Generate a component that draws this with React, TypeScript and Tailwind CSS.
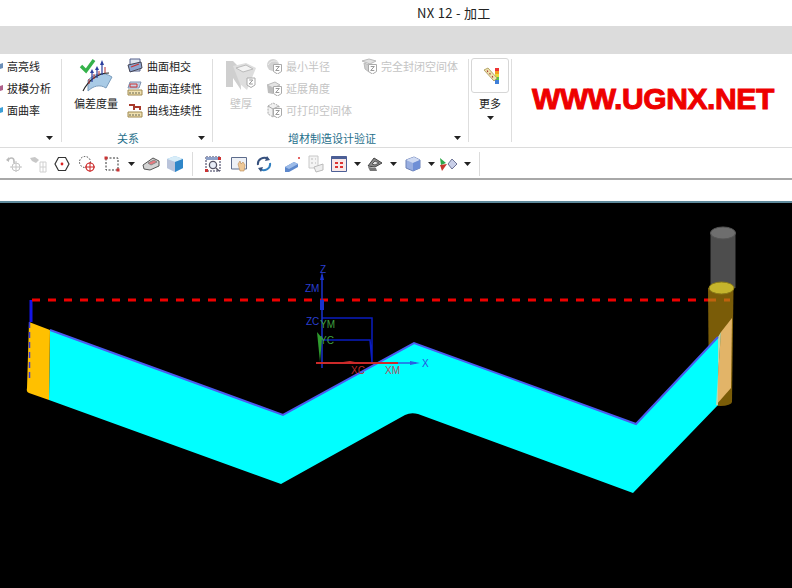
import React from "react";

const Arrow = () => (
  <svg width="7" height="4" viewBox="0 0 7 4" className="block shrink-0">
    <path d="M0 0H7L3.5 4Z" fill="#222" />
  </svg>
);

const Badge = ({ x, y }: { x: number; y: number }) => (
  <g transform={`translate(${x} ${y})`}>
    <path d="M0 0H8V7L4 9.5L0 7Z" fill="#fff" stroke="#aaa" />
    <path d="M2.2 2H5.8L2.2 6H5.8" fill="none" stroke="#999" strokeWidth="1" />
  </g>
);

const I = ({ w = 16, h = 16, children }: { w?: number; h?: number; children: React.ReactNode }) => (
  <svg width={w} height={h} viewBox={`0 0 ${w} ${h}`} className="block shrink-0">
    {children}
  </svg>
);

const Sep = () => <div className="w-px shrink-0 bg-[#dedede] mt-[4px] mb-[5px]" />;

const Deviation = () => (
  <I w={34} h={34}>
    <path d="M9 22C15 16 24 13 33 19L27 30C21 26 14 28 9 33Z" fill="#a9cbe6" stroke="#7a9cbc" />
    <path d="M4 33C9 23 18 15 30 15" fill="none" stroke="#222" strokeWidth="1.1" />
    <path d="M13 24V14M18 20V11M23 17V6" stroke="#2c3f9e" strokeWidth="1.2" fill="none" />
    <path d="M11 15L13 11L15 15ZM16 12L18 8L20 12ZM21 7L23 2L25 7Z" fill="#2c3f9e" />
    <path d="M10 26V21M15 21V16M20 17V13M26 15V9" stroke="#b33" strokeWidth="1" fill="none" />
    <path d="M2 8L7 13L15 2" fill="none" stroke="#35b24a" strokeWidth="3.4" />
  </I>
);

const Intersect = () => (
  <I>
    <path d="M3 1H13V13H3Z" fill="#dfe5ef" stroke="#55608c" />
    <path d="M1 7L14 4L15 10L3 14Z" fill="#8ea5cf" stroke="#445" />
    <path d="M4 9L12 6" stroke="#c33" strokeWidth="1.2" />
  </I>
);

const SurfCont = () => (
  <I>
    <path d="M3 2H14L12 8H1Z" fill="#c4d4e8" stroke="#8093b0" />
    <path d="M3 4H10V7H3Z" fill="none" stroke="#c33" />
    <path d="M1 10H15V15H1Z" fill="#efe0b0" stroke="#a08a50" />
    <path d="M3 12V14M6 12V14M9 12V14M12 12V14" stroke="#665" />
  </I>
);

const CurveCont = () => (
  <I>
    <path d="M2 3H7V8M7 5H13V8" fill="none" stroke="#a8392b" strokeWidth="2" />
    <path d="M1 10H15V15H1Z" fill="#efe0b0" stroke="#a08a50" />
    <path d="M3 12V14M6 12V14M9 12V14M12 12V14" stroke="#665" />
  </I>
);

const Partial = ({ color }: { color: string }) => (
  <I w={3} h={10}>
    <path d="M0 3L3 2V7L0 8Z" fill={color} />
  </I>
);

const WallThickness = () => (
  <I w={32} h={32}>
    <path d="M1 1H8L15 8L16 30L8 18V27H1Z" fill="#cfcfcf" />
    <path d="M8 6L21 3L31 8L22 30L15 24Z" fill="#dedede" />
    <path d="M11 8L21 5L28 9L18 12Z" fill="#f3f3f3" stroke="#bbb" />
    <Badge x={22} y={18} />
  </I>
);

const Ball = () => (
  <I>
    <circle cx="7" cy="7" r="6" fill="#d2d2d2" />
    <path d="M2 7C4 3 9 2 12 4" stroke="#eee" fill="none" />
    <Badge x={7.5} y={6.5} />
  </I>
);
const Draft = () => (
  <I>
    <path d="M1 5L9 2L14 5L7 8Z" fill="#e4e4e4" stroke="#bbb" />
    <path d="M1 5L7 8V14L2 13Z" fill="#bdbdbd" />
    <Badge x={7.5} y={6.5} />
  </I>
);
const Print = () => (
  <I>
    <path d="M2 4L7 1L13 4V11L7 15L2 12Z" fill="#f0f0f0" stroke="#aaa" strokeDasharray="2 1" />
    <path d="M2 4L7 7L13 4M7 7V15" stroke="#aaa" fill="none" />
    <Badge x={7.5} y={6.5} />
  </I>
);
const Closed = () => (
  <I>
    <path d="M1 3L8 1L15 3L9 6Z" fill="#e2e2e2" stroke="#bbb" />
    <path d="M3 5L8 7V14L4 11Z" fill="#cfcfcf" stroke="#bbb" />
    <Badge x={7.5} y={6.5} />
  </I>
);

const RainbowRuler = () => (
  <I w={18} h={18}>
    <path d="M14 1H18V4H14Z" fill="#e33" />
    <path d="M14 4H18V7H14Z" fill="#f59a23" />
    <path d="M14 7H18V10H14Z" fill="#e8dc3a" />
    <path d="M14 10H18V13H14Z" fill="#5cbf4a" />
    <path d="M14 13H18V17H14Z" fill="#3f7fd8" />
    <path d="M3 3L7 1L16 11L13 14Z" fill="#efe4b0" stroke="#b5a66a" />
    <path d="M6 4.5L7 4M8.5 7L9.5 6.5M11 10L12 9.5" stroke="#a33" strokeWidth="1.4" />
  </I>
);

type RowProps = { icon: React.ReactNode; label: string; dim?: boolean };
const Row = ({ icon, label, dim }: RowProps) => (
  <div className="flex items-center h-[22px] gap-[4px] whitespace-nowrap">
    {icon}
    <span className={dim ? "text-[#c4c4c4]" : "text-[#222]"}>{label}</span>
  </div>
);

const Tb = {
  Undo: () => (
    <I w={16} h={18}>
      <path d="M2 6C3 2 8 2 8 6V8" fill="none" stroke="#bbb" strokeWidth="1.6" />
      <path d="M0 5L3 2V7Z" fill="#bbb" />
      <circle cx="10" cy="12" r="4" fill="none" stroke="#c4c4c4" />
      <path d="M10 6V17M4 12H16" stroke="#c4c4c4" />
    </I>
  ),
  Hand: () => (
    <I w={18} h={18}>
      <path d="M1 3L6 2L10 5L7 8L3 6Z" fill="#c8c8c8" />
      <path d="M11 7H17V17H11ZM14 7V17M11 12H17" fill="none" stroke="#d0d0d0" />
    </I>
  ),
  Hex: () => (
    <I w={16} h={16}>
      <path d="M4.5 1.5H11.5L15 8L11.5 14.5H4.5L1 8Z" fill="#fff" stroke="#333" strokeWidth="1.2" />
      <circle cx="8" cy="8" r="1.4" fill="#d22" />
    </I>
  ),
  CircleSel: () => (
    <I w={18} h={18}>
      <circle cx="7" cy="7" r="5.5" fill="none" stroke="#444" strokeDasharray="1.5 1.5" />
      <circle cx="12" cy="12" r="4" fill="#fff" stroke="#c22" strokeWidth="1.2" />
      <path d="M12 7V17M7 12H17" stroke="#c22" />
    </I>
  ),
  Rect: () => (
    <I w={16} h={16}>
      <path d="M2 2H14V14H2Z" fill="none" stroke="#333" strokeDasharray="2 1.5" />
      <rect x="0.5" y="0.5" width="3" height="3" fill="#c33" />
      <rect x="12.5" y="12.5" width="3" height="3" fill="#c33" />
    </I>
  ),
  Cam: () => (
    <I w={18} h={14}>
      <path d="M1 8L11 1L17 4L17 9L8 13L2 12Z" fill="#d4d4d4" stroke="#555" />
      <path d="M6 6L12 3L15 5L9 8Z" fill="#e87a80" stroke="#888" />
    </I>
  ),
  Cube: () => (
    <I w={18} h={18}>
      <path d="M1 4L9 1L17 4V13L9 17L1 13Z" fill="#8fc2ec" />
      <path d="M1 4L9 7L17 4L9 1Z" fill="#d8edf8" />
      <path d="M9 7V17L17 13V4Z" fill="#2f86c8" />
      <path d="M1 4V13L9 17V7Z" fill="#f0c8c8" opacity="0.45" />
    </I>
  ),
  Zoom: () => (
    <I w={16} h={16}>
      <path d="M1 1H15V15H1Z" fill="#fff" stroke="#335" strokeDasharray="2 1" />
      <path d="M1 1H15V4H1Z" fill="#8da0c8" />
      <circle cx="8" cy="9" r="3.6" fill="#e8eef8" stroke="#556" strokeWidth="1.3" />
      <path d="M11 12L14 15" stroke="#556" strokeWidth="1.5" />
      <rect x="0" y="13" width="3" height="3" fill="#c33" />
      <rect x="13" y="1" width="3" height="3" fill="#c33" />
    </I>
  ),
  Pan: () => (
    <I w={16} h={16}>
      <path d="M0.5 1.5H15.5V13H0.5Z" fill="#eef1f6" stroke="#5d6c8c" />
      <path d="M7 8L9 5L10 8L12 6L14 9L13 15H9Z" fill="#eec896" stroke="#b88a58" strokeWidth="0.6" />
    </I>
  ),
  Rotate: () => (
    <I w={16} h={16}>
      <path d="M2 9C1 3 8 0 12 3" fill="none" stroke="#37517e" strokeWidth="2" />
      <path d="M14 7C15 13 8 16 4 13" fill="none" stroke="#2f7fc0" strokeWidth="2" />
      <path d="M11 0L14 4L9 5ZM5 16L2 12L7 11Z" fill="#37517e" />
    </I>
  ),
  Beam: () => (
    <I w={16} h={16}>
      <path d="M1 11L10 6L14 8L14 11L5 16H1Z" fill="#5d88cc" />
      <path d="M10 6L14 8L5 13L1 11Z" fill="#9cbbe8" />
      <circle cx="15" cy="2" r="1" fill="#d33" />
    </I>
  ),
  Doc: () => (
    <I w={16} h={18}>
      <path d="M1 1H10V13H1Z" fill="#f4f4f4" stroke="#c8c8c8" />
      <path d="M3 4H5M7 4H8M3 8H5M7 8H8" stroke="#bbb" />
      <path d="M6 12L15 9V15L8 17Z" fill="#eee" stroke="#bbb" />
    </I>
  ),
  Layout: () => (
    <I w={16} h={16}>
      <path d="M0.5 0.5H15.5V15.5H0.5Z" fill="#f7e8e8" stroke="#4c5f96" />
      <path d="M0.5 0.5H15.5V3H0.5Z" fill="#4c5f96" />
      <path d="M4 6H7V8H4ZM9 6H12V8H9ZM4 10H7V12H4ZM9 10H12V12H9Z" fill="#d33" />
    </I>
  ),
  Shade: () => (
    <I w={16} h={16}>
      <path d="M1 10L7 2L15 7L8 11Z" fill="#8a8a8a" stroke="#444" />
      <path d="M5 8L8 5L12 7L8 9Z" fill="#e4e4e4" stroke="#555" />
      <path d="M1 11L9 12L10 15H3Z" fill="#777" />
    </I>
  ),
  Box: () => (
    <I w={16} h={16}>
      <path d="M1 4L9 1L15 4V12L8 15L1 12Z" fill="#98aee0" stroke="#6d82b8" />
      <path d="M1 4L8 7L15 4L9 1Z" fill="#cfdaf2" />
      <path d="M8 7V15L15 12V4Z" fill="#6f8fd6" />
    </I>
  ),
  Diamond: () => (
    <I w={18} h={16}>
      <path d="M9 8L13 3L18 8L13 13Z" fill="#c9cfe8" stroke="#6d7395" />
      <path d="M1 2L7 7L2 9Z" fill="#2ea84a" />
      <path d="M1 9L8 8L3 15Z" fill="#c7362e" />
    </I>
  ),
};

function Model() {
  return (
    <svg width="792" height="385" viewBox="0 203 792 385" className="block">
      {/* tool, behind the translucent sheet */}
      <path d="M710.5 233V288H735.5V233Z" fill="#4d4d4d" />
      <ellipse cx="723" cy="233" rx="12.5" ry="6" fill="#6e6e6e" stroke="#555" />
      <path d="M708 288H733.5L732 402H709Z" fill="#7a5c08" />
      <ellipse cx="720.5" cy="402" rx="11.5" ry="4" fill="#7a5c08" />
      <ellipse cx="721.5" cy="288" rx="12.5" ry="6" fill="#c5b42c" stroke="#8a7a18" />
      <path d="M721 332L732 318L731 388L716 405Z" fill="#e2b468" />

      <path
        d="M50 330L283 415L414 343L636 424L718 337V405L633 493L418 414Q411 412 405 415L281 484L49 400Z"
        fill="#00ffff"
      />
      <path d="M718 337L721 332L716 405L718 405Z" fill="#b8d8b0" />
      <path d="M29 322L50 330L49 400L29 393Q26 392 27 388Z" fill="#ffc000" />
      <path d="M50 330L283 415L414 343L636 424L718 337" fill="none" stroke="#4a5cf0" strokeWidth="2" />
      <path d="M31 300V322" stroke="#1414e6" strokeWidth="3" />
      <path d="M29.5 322V378" stroke="#3a3ad8" strokeWidth="1.5" strokeDasharray="6 4" />
      <path d="M32 300H708" stroke="#ee0000" strokeWidth="3" strokeDasharray="8 8" />
      <path d="M708 300H730" stroke="#c0620e" strokeWidth="3" strokeDasharray="8 8" />

      <path d="M322 318H372V362M322 340H370L372 362" fill="none" stroke="#0a1cc0" strokeWidth="1.5" />
      <path d="M322 275V368" stroke="#1a33cc" strokeWidth="1.5" />
      <path d="M320 280L322 272L324 280Z" fill="#1a33cc" />
      <path d="M320 300H324V310H320Z" fill="#1a33cc" />
      <path d="M317 332L320 362L322 338Z" fill="#2e9c2e" />
      <path d="M316 363H398" stroke="#cc2a2a" strokeWidth="2" />
      <path d="M336 363L350 361L360 363Z" fill="#cc2a2a" />
      <path d="M398 363H416" stroke="#2a60e0" strokeWidth="1.5" />
      <path d="M410 361L420 363L410 365Z" fill="#2a60e0" />
      <g className="text-[10px]" style={{ fontFamily: "'Liberation Sans', sans-serif" }}>
        <text x="320" y="273" fill="#2a3fd0">Z</text>
        <text x="305" y="292" fill="#2a3fd0">ZM</text>
        <text x="306" y="325" fill="#2a3fd0">ZC</text>
        <text x="320" y="328" fill="#3f9f3f">YM</text>
        <text x="320" y="344" fill="#3f9f3f">YC</text>
        <text x="351" y="374" fill="#bb2a2a">XC</text>
        <text x="385" y="374" fill="#b05060">XM</text>
        <text x="422" y="367" fill="#2a50e0">X</text>
      </g>
    </svg>
  );
}

export default function App() {
  return (
    <div
      className="flex flex-col w-[792px] h-[588px] overflow-hidden bg-white text-[11px] leading-none"
      style={{ fontFamily: "'Noto Sans CJK SC', 'Liberation Sans', sans-serif" }}
    >
      <div className="h-[26px] pl-[417px] pb-[1px] flex items-center text-[13px] tracking-[0.3px] text-[#222]">NX 12 - 加工</div>
      <div className="h-[28px] bg-[#dcdcdc]" />

      <div className="h-[94px] flex pt-[1px] border-b border-[#dcdcdc]">
        <div className="w-[61px] shrink-0 flex flex-col">
          <div className="flex flex-col flex-1">
            <div className="flex items-center h-[22px] gap-[4px]">
              <Partial color="#6c8fb8" />
              <span className="text-[#222]">高亮线</span>
            </div>
            <div className="flex items-center h-[22px] gap-[4px]">
              <Partial color="#b0608a" />
              <span className="text-[#222] whitespace-nowrap">拔模分析</span>
            </div>
            <div className="flex items-center h-[22px] gap-[4px]">
              <Partial color="#3ca0d8" />
              <span className="text-[#222]">面曲率</span>
            </div>
          </div>
          <div className="flex items-center justify-end h-[18px] pr-[8px]">
            <Arrow />
          </div>
        </div>
        <Sep />

        <div className="w-[150px] shrink-0 flex flex-col">
          <div className="flex flex-1">
            <div className="w-[65px] shrink-0 flex flex-col items-center pt-[3px] pl-[3px]">
              <Deviation />
              <span className="mt-[6px] whitespace-nowrap text-[#222]">偏差度量</span>
            </div>
            <div className="flex flex-col">
              <Row icon={<Intersect />} label="曲面相交" />
              <Row icon={<SurfCont />} label="曲面连续性" />
              <Row icon={<CurveCont />} label="曲线连续性" />
            </div>
          </div>
          <div className="flex items-center justify-between h-[18px] pl-[55px] pr-[7px]">
            <span className="text-[#1f6f8b]">关系</span>
            <Arrow />
          </div>
        </div>
        <Sep />

        <div className="w-[255px] shrink-0 flex flex-col">
          <div className="flex flex-1">
            <div className="w-[53px] shrink-0 flex flex-col items-center pt-[5px] pl-[3px]">
              <WallThickness />
              <span className="mt-[6px] text-[#c4c4c4]">壁厚</span>
            </div>
            <div className="w-[95px] shrink-0 flex flex-col">
              <Row dim icon={<Ball />} label="最小半径" />
              <Row dim icon={<Draft />} label="延展角度" />
              <Row dim icon={<Print />} label="可打印空间体" />
            </div>
            <div className="flex flex-col">
              <Row dim icon={<Closed />} label="完全封闭空间体" />
            </div>
          </div>
          <div className="flex items-center justify-between h-[18px] pl-[75px] pr-[7px]">
            <span className="text-[#1f6f8b] whitespace-nowrap">增材制造设计验证</span>
            <Arrow />
          </div>
        </div>
        <Sep />

        <div className="w-[42px] shrink-0 flex flex-col items-center pt-[3px]">
          <div className="w-[38px] h-[35px] rounded-[3px] border border-[#d6d6d6] flex items-center justify-center">
            <RainbowRuler />
          </div>
          <span className="mt-[5px] text-[#222]">更多</span>
          <div className="mt-[7px]">
            <Arrow />
          </div>
        </div>
        <Sep />

        <div className="flex-1 flex items-start pl-[20px] pt-[29px]">
          <span
            className="text-[30px] font-bold text-[#ee0000] whitespace-nowrap tracking-[-0.4px] [-webkit-text-stroke:1px_#ee0000]"
            style={{ fontFamily: "'Liberation Sans', sans-serif" }}
          >
            WWW.UGNX.NET
          </span>
        </div>
      </div>

      <div className="h-[32px] flex items-center border-b-2 border-[#a8a8a8] pl-[6px] pt-[1px]">
        <div className="flex items-center w-[187px] h-[24px] border-r border-[#dcdcdc]">
          <div><Tb.Undo /></div>
          <div className="ml-[7px]"><Tb.Hand /></div>
          <div className="ml-[7px]"><Tb.Hex /></div>
          <div className="ml-[8px]"><Tb.CircleSel /></div>
          <div className="ml-[8px]"><Tb.Rect /></div>
          <div className="ml-[8px]"><Arrow /></div>
          <div className="ml-[7px]"><Tb.Cam /></div>
          <div className="ml-[6px]"><Tb.Cube /></div>
        </div>
        <div className="flex items-center w-[287px] h-[24px] border-r border-[#dcdcdc] pl-[12px]">
          <Tb.Zoom />
          <div className="ml-[10px]"><Tb.Pan /></div>
          <div className="ml-[9px]"><Tb.Rotate /></div>
          <div className="ml-[12px]"><Tb.Beam /></div>
          <div className="ml-[8px]"><Tb.Doc /></div>
          <div className="ml-[7px]"><Tb.Layout /></div>
          <div className="ml-[7px]"><Arrow /></div>
          <div className="ml-[6px]"><Tb.Shade /></div>
          <div className="ml-[7px]"><Arrow /></div>
          <div className="ml-[8px]"><Tb.Box /></div>
          <div className="ml-[7px]"><Arrow /></div>
          <div className="ml-[4px]"><Tb.Diamond /></div>
          <div className="ml-[7px]"><Arrow /></div>
        </div>
      </div>

      <div className="h-[21px]" />
      <div className="h-[2px] bg-[#5f8a9c]" />
      <div className="flex-1 bg-black">
        <Model />
      </div>
    </div>
  );
}
